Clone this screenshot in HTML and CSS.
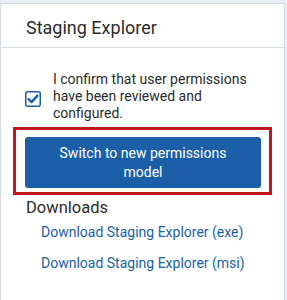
FILE: index.html
```html
<!DOCTYPE html>
<html>
<head>
<meta charset="utf-8">
<link rel="stylesheet" href="styles.css">
</head>
<body>
<div class="card">
  <div class="card-header">Staging Explorer</div>
  <div class="card-body">
    <div class="confirm">
      <span class="checkbox">
        <svg width="16" height="16" viewBox="0 0 16 16">
          <rect x="0.75" y="0.75" width="14.5" height="14.5" rx="2" fill="#fff" stroke="#1a5fa8" stroke-width="1.5"/>
          <path d="M3.6 8.2 L6.6 11.1 L12.4 4.6" fill="none" stroke="#1a5fa8" stroke-width="2.4" stroke-linecap="round" stroke-linejoin="round"/>
        </svg>
      </span>
      <span class="confirm-text">I confirm that user permissions have been reviewed and configured.</span>
    </div>
    <div class="highlight">
      <button class="btn">Switch to new permissions model</button>
    </div>
    <div class="downloads-title">Downloads</div>
    <ul class="links">
      <li><a href="#">Download Staging Explorer (exe)</a></li>
      <li><a href="#">Download Staging Explorer (msi)</a></li>
    </ul>
  </div>
</div>
</body>
</html>
```
FILE: styles.css
```css
html, body {
  margin: 0;
  padding: 0;
  background: #e9edf2;
  font-family: Roboto, "Liberation Sans", Arial, sans-serif;
  color: #2b2b2b;
}
.card {
  margin: 3px 2px 0 0;
  background: #fff;
  border: 1px solid #d6dce4;
  border-bottom: none;
  min-height: 310px;
}
.card-header {
  height: 44px;
  box-sizing: border-box;
  padding: 13px 0 0 25px;
  font-size: 18px;
  line-height: 21px;
  border-bottom: 1px solid #d6dce4;
}
.card-body {
  padding-top: 23px;
}
.confirm {
  display: flex;
  align-items: center;
  padding-left: 24px;
  padding-right: 20px;
}
.checkbox {
  display: flex;
  width: 16px;
  height: 16px;
  margin-top: 5px;
  flex: none;
}
.confirm-text {
  margin-left: 12px;
  font-size: 14px;
  line-height: 17px;
}
.highlight {
  margin: 5px 12px 0 12px;
  border: 3px solid #c0161e;
  padding: 7px 8px 4px 9px;
}
.btn {
  display: block;
  width: 100%;
  height: 51px;
  border: none;
  border-radius: 3px;
  background: #1a5fa8;
  color: #fff;
  font-family: inherit;
  font-size: 14px;
  line-height: 19px;
  padding: 0 30px;
}
.downloads-title {
  margin-top: 3px;
  padding-left: 25px;
  font-size: 16.5px;
  line-height: 19px;
}
.links {
  list-style: none;
  margin: 7px 0 0 0;
  padding: 0 0 0 40px;
}
.links li {
  font-size: 14px;
  line-height: 17px;
  margin-bottom: 14px;
}
.links a {
  color: #1a5fa8;
  text-decoration: none;
}
```
